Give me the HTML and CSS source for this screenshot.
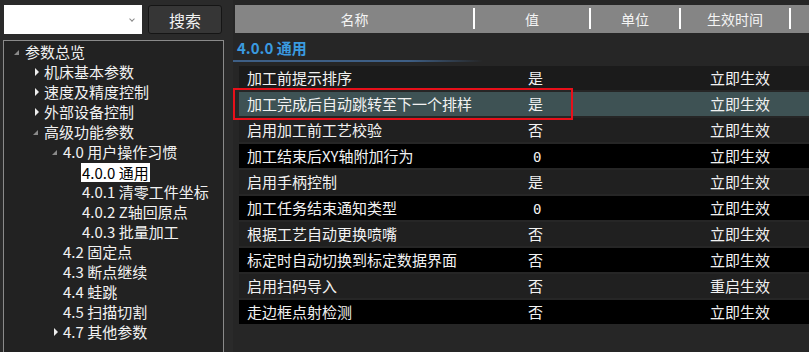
FILE: index.html
```html
<!DOCTYPE html>
<html lang="zh-CN">
<head>
    <meta charset="UTF-8">
    <meta name="viewport" content="width=device-width, initial-scale=1.0">
    <title>参数总览</title>
    <link rel="stylesheet" href="styles.css">
</head>
<body>
<div class="app">
    <div class="side">
        <div class="searchbar">
            <div class="combo"><span class="chev"></span></div>
            <button class="search-btn">搜索</button>
        </div>
        <div class="tree">
            <div class="node lv0"><span class="arrow open"></span>参数总览</div>
            <div class="node lv1"><span class="arrow closed"></span>机床基本参数</div>
            <div class="node lv1"><span class="arrow closed"></span>速度及精度控制</div>
            <div class="node lv1"><span class="arrow closed"></span>外部设备控制</div>
            <div class="node lv1"><span class="arrow open"></span>高级功能参数</div>
            <div class="node lv2"><span class="arrow open"></span>4.0 用户操作习惯</div>
            <div class="node lv3"><span class="arrow"></span><span class="sel">4.0.0 通用</span></div>
            <div class="node lv3"><span class="arrow"></span>4.0.1 清零工件坐标</div>
            <div class="node lv3"><span class="arrow"></span>4.0.2 Z轴回原点</div>
            <div class="node lv3"><span class="arrow"></span>4.0.3 批量加工</div>
            <div class="node lv2"><span class="arrow"></span>4.2 固定点</div>
            <div class="node lv2"><span class="arrow"></span>4.3 断点继续</div>
            <div class="node lv2"><span class="arrow"></span>4.4 蛙跳</div>
            <div class="node lv2"><span class="arrow"></span>4.5 扫描切割</div>
            <div class="node lv2"><span class="arrow closed"></span>4.7 其他参数</div>
        </div>
    </div>

    <div class="main">
        <div class="grid-head">
            <div class="col c-name">名称</div>
            <div class="col c-val">值</div>
            <div class="col c-unit">单位</div>
            <div class="col c-time">生效时间</div>
        </div>

        <div class="group">4.0.0 通用</div>
        <div class="group-line"></div>

        <div class="rows">
            <div class="row r-first"><span class="name">加工前提示排序</span><span class="val">是</span><span class="time">立即生效</span></div>
            <div class="row r-sel"><span class="name">加工完成后自动跳转至下一个排样</span><span class="val">是</span><span class="time">立即生效</span></div>
            <div class="row"><span class="name">启用加工前工艺校验</span><span class="val">否</span><span class="time">立即生效</span></div>
            <div class="row"><span class="name">加工结束后XY轴附加行为</span><span class="val"><span class="num">0</span></span><span class="time">立即生效</span></div>
            <div class="row"><span class="name">启用手柄控制</span><span class="val">是</span><span class="time">立即生效</span></div>
            <div class="row"><span class="name">加工任务结束通知类型</span><span class="val"><span class="num">0</span></span><span class="time">立即生效</span></div>
            <div class="row"><span class="name">根据工艺自动更换喷嘴</span><span class="val">否</span><span class="time">立即生效</span></div>
            <div class="row"><span class="name">标定时自动切换到标定数据界面</span><span class="val">否</span><span class="time">立即生效</span></div>
            <div class="row"><span class="name">启用扫码导入</span><span class="val">否</span><span class="time">重启生效</span></div>
            <div class="row"><span class="name">走边框点射检测</span><span class="val">否</span><span class="time">立即生效</span></div>
        </div>

        <!-- annotation box -->
        <div class="mark"></div>
    </div>
</div>
</body>
</html>
```

FILE: styles.css
```css
* {
    box-sizing: border-box;
}
body {
    margin: 0;
    background-color: #2a2a2a;
    font-family: "Noto Sans CJK SC", "Noto Sans", sans-serif;
    color: #f2f2f2;
    overflow: hidden;
}
.app {
    display: flex;
    width: 809px;
    height: 352px;
}

/* left side */
.side {
    width: 233px;
    flex-shrink: 0;
    display: flex;
    flex-direction: column;
}
.searchbar {
    display: flex;
    margin-top: 5px;
    height: 29px;
}
.combo {
    width: 138px;
    margin-left: 4px;
    background-color: #fff;
    position: relative;
}
.chev {
    position: absolute;
    right: 8px;
    top: 12px;
    width: 4px;
    height: 4px;
    border-right: 1px solid #888;
    border-bottom: 1px solid #888;
    transform: rotate(45deg);
}
.search-btn {
    width: 74px;
    margin-left: 6px;
    background-color: #363636;
    border: 1px solid #151515;
    border-radius: 3px;
    color: #f2f2f2;
    font-family: inherit;
    font-size: 16px;
    padding: 0;
}
.tree {
    margin: 6px 0 0 3px;
    width: 221px;
    flex: 1;
    border: 1px solid #8a8a8a;
    border-bottom: none;
    background-color: #222;
    padding-top: 1px;
    overflow: hidden;
}
.node {
    height: 20px;
    line-height: 20px;
    font-size: 15px;
    display: flex;
    align-items: center;
    white-space: nowrap;
}
.lv0 { padding-left: 10px; }
.lv1 { padding-left: 29px; }
.lv2 { padding-left: 48px; }
.lv3 { padding-left: 67px; }
.arrow {
    width: 11px;
    height: 20px;
    flex-shrink: 0;
    position: relative;
}
.arrow.open::after {
    content: "";
    position: absolute;
    left: 0;
    top: 8px;
    border-left: 5px solid transparent;
    border-bottom: 5px solid #8a8a8a;
}
.arrow.closed::after {
    content: "";
    position: absolute;
    left: 2px;
    top: 6px;
    border-top: 4px solid transparent;
    border-bottom: 4px solid transparent;
    border-left: 4px solid #eee;
}
.sel {
    background-color: #fff;
    color: #000;
    margin-left: -1px;
    padding: 0 1px;
    line-height: 19px;
}

/* right side */
.main {
    flex: 1;
    position: relative;
    background-color: #262626;
}
.grid-head {
    display: flex;
    margin: 5px 0 0 2px;
    height: 28px;
    background-color: #858585;
    font-size: 14px;
    color: #f4f4f4;
}
.col {
    text-align: center;
    line-height: 28px;
    position: relative;
}
.col::after {
    content: "";
    position: absolute;
    right: -1px;
    top: 3px;
    width: 2px;
    height: 21px;
    background-color: #fff;
}
.c-name { width: 239px; }
.c-val { width: 116px; }
.c-unit { width: 90px; }
.c-time { width: 110px; }
.group {
    height: 27px;
    line-height: 29px;
    padding-left: 4px;
    color: #3a9be0;
    font-size: 15px;
    font-weight: bold;
}
.group-line {
    height: 2px;
    width: 250px;
    background: linear-gradient(to right, #3e5f86, #3e5f86 70%, rgba(62, 95, 134, 0));
}
.rows {
    margin: 4px 0 0 6px;
}
.row {
    display: flex;
    height: 24px;
    line-height: 24px;
    margin-bottom: 2px;
    font-size: 15px;
    background-color: #000;
    white-space: nowrap;
}
.row:nth-child(odd) {
    background-color: #202020;
}
.row.r-first {
    background-color: #1b1b1b;
}
.row.r-sel {
    background-color: #3e5254;
}
.name {
    width: 234px;
    padding-left: 8px;
    overflow: hidden;
}
.val {
    width: 206px;
    padding-left: 55px;
}
.num {
    font-family: "DejaVu Sans Mono", monospace;
    font-size: 14px;
    padding-left: 5px;
}
.time {
    padding-left: 31px;
}
.mark {
    position: absolute;
    left: 0;
    top: 88px;
    width: 340px;
    height: 32px;
    border: 2px solid #e8101a;
}
```
